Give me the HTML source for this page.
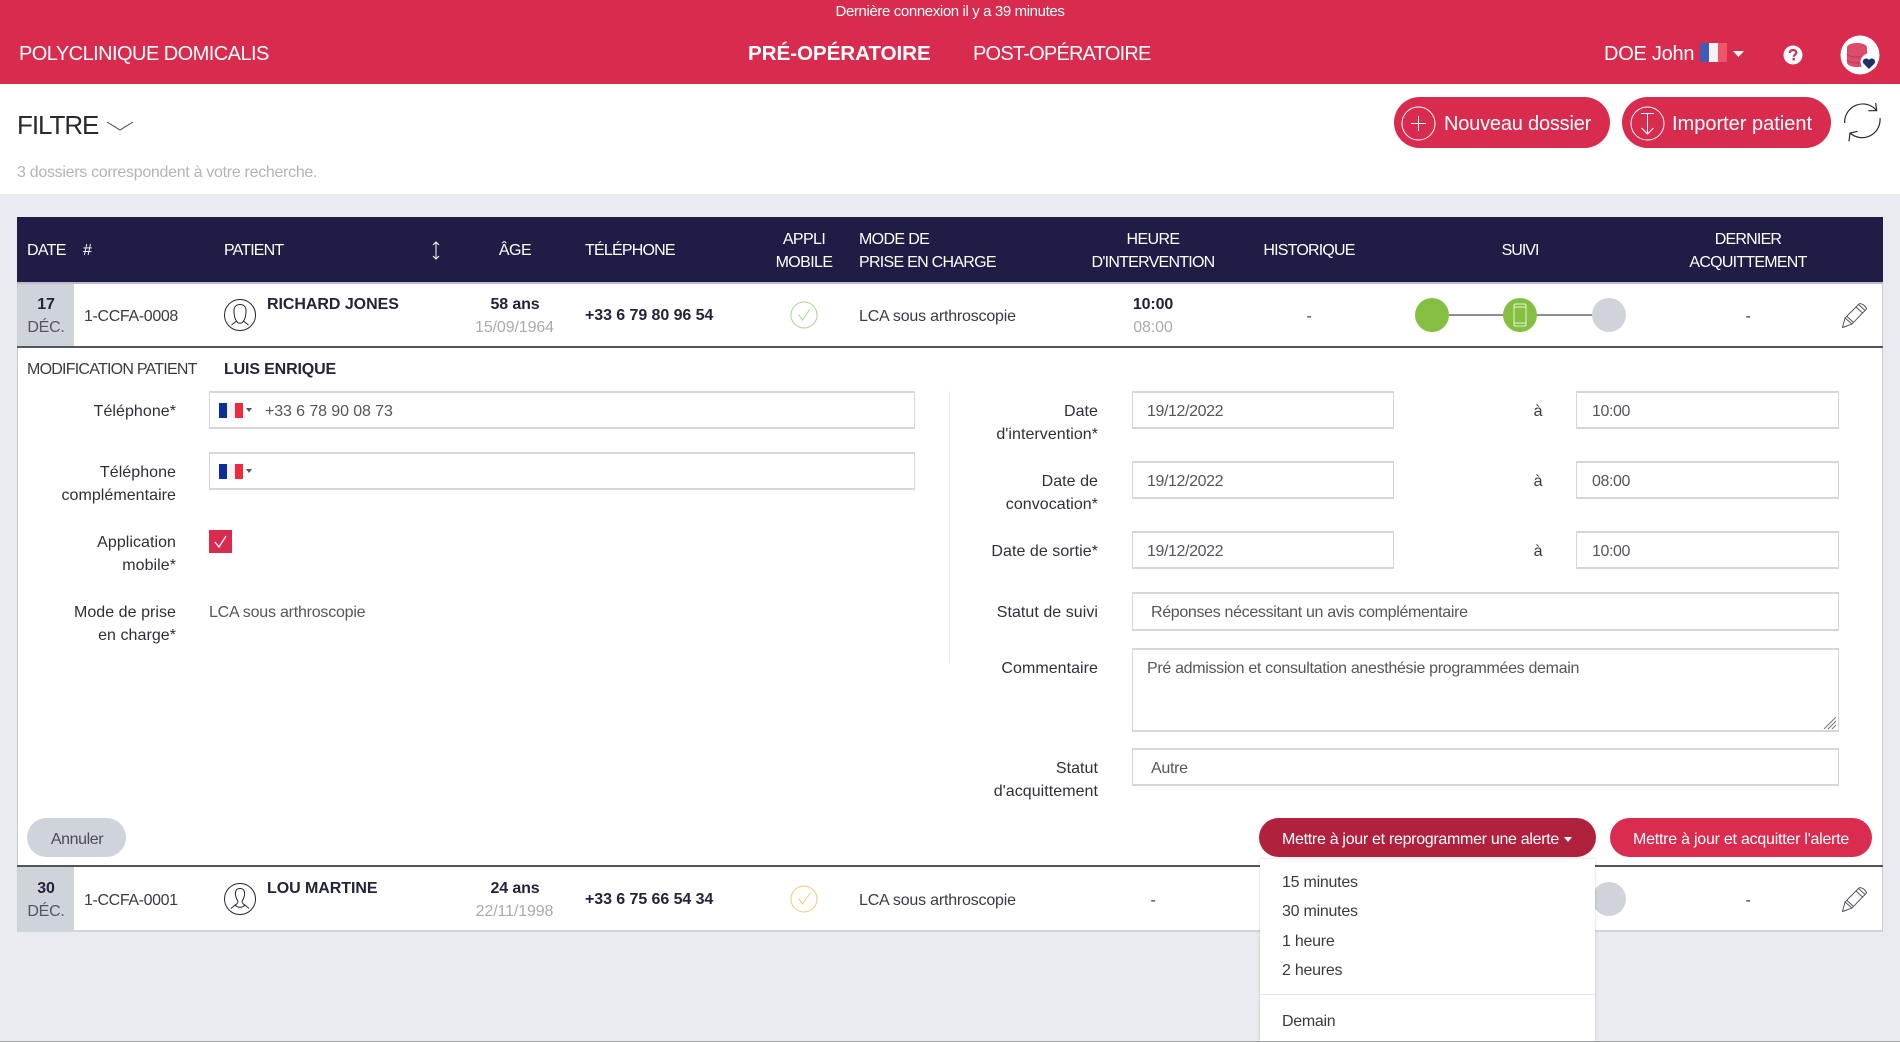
<!DOCTYPE html>
<html lang="fr">
<head>
<meta charset="utf-8">
<title>Polyclinique Domicalis</title>
<style>
html,body{margin:0;padding:0;width:1900px;height:1042px;overflow:hidden;background:#e9ebf0}
body{position:relative;font-family:"Liberation Sans",sans-serif;font-size:16px;color:#3a3a44;letter-spacing:-.25px}
div,svg{position:absolute;box-sizing:border-box}
.t{white-space:nowrap;line-height:20px;height:20px;margin-top:1px}
.c{width:240px;text-align:center}
.b{font-weight:bold;color:#23233a;letter-spacing:-.15px}
.g{color:#a9abb0;letter-spacing:-.12px}
.h{color:#fff;letter-spacing:-.55px}
.lab{color:#2f2f3a;text-align:right;letter-spacing:.05px}
.in{background:#fff;border:1px solid #d5d7db;border-bottom:2px solid #d5d7db;border-top-width:2px}
.pill{border-radius:20px}
.date{background:#cfd4da;left:18px;width:56px}
</style>
</head>
<body>
<!-- top bar -->
<div style="left:0;top:0;width:1900px;height:84px;background:#d92b4e"></div>
<div class="t c" style="left:830px;top:1px;color:#fff;font-size:15px;letter-spacing:-.38px">Dernière connexion il y a 39 minutes</div>
<div class="t h" style="left:19px;top:43px;font-size:20px">POLYCLINIQUE DOMICALIS</div>
<div class="t" style="left:748px;top:43px;font-size:20.7px;font-weight:bold;color:#fff;letter-spacing:-.12px">PRÉ-OPÉRATOIRE</div>
<div class="t h" style="left:973px;top:43px;font-size:20px;letter-spacing:-.78px">POST-OPÉRATOIRE</div>
<div class="t" style="left:1604px;top:43px;font-size:20px;color:#fff;letter-spacing:-.25px">DOE John</div>
<svg style="left:1700px;top:43px" width="27" height="19"><rect width="9" height="19" fill="#3f5cb8"/><rect x="9" width="9" height="19" fill="#f6f1f4"/><rect x="18" width="9" height="19" fill="#ee5568"/></svg>
<svg style="left:1733px;top:51px" width="12" height="7"><path d="M0 0H11L5.500 6Z" fill="#fff"/></svg>
<svg style="left:1783px;top:45px" width="20" height="20"><circle cx="10" cy="10" r="9.500" fill="#fff"/><path d="M6.800 8C6.800 5.800 8.300 5 10 5 11.900 5 13.300 6 13.300 7.800 13.300 9.800 10.800 9.800 10.800 11.800" fill="none" stroke="#d92b4e" stroke-width="2.200"/><rect x="9.500" y="13" width="2.400" height="2.400" fill="#d92b4e"/></svg>
<svg style="left:1840px;top:35px" width="42" height="42"><circle cx="20" cy="20" r="19.500" fill="#fff"/><path d="M7 13C7 9 13 8 17 8S27 9 27 13V27C27 31 21 32 17 32S7 31 7 27Z" fill="#dc4c6c"/><path d="M7 19C10 23 24 23 27 19M7 25C10 29 24 29 27 25" fill="none" stroke="#c5304f" stroke-width="1"/><circle cx="29" cy="27" r="8.500" fill="#fff"/><path d="M29 34L23.500 28.500C21 25 26.500 21.500 29 25 31.500 21.500 37 25 34.500 28.500Z" fill="#22305f"/></svg>

<!-- filter bar -->
<div style="left:0;top:84px;width:1900px;height:110px;background:#fff"></div>
<div class="t" style="left:17px;top:114px;font-size:26px;line-height:20px;color:#2a2a33;letter-spacing:-1.05px">FILTRE</div>
<svg style="left:106px;top:120px" width="28" height="12"><path d="M1 2L14 10 27 2" fill="none" stroke="#444" stroke-width="1"/></svg>
<div class="t g" style="left:17px;top:162px;letter-spacing:-.3px;color:#b3b4b8">3 dossiers correspondent à votre recherche.</div>

<div style="left:1394px;top:97px;width:216px;height:51px;border-radius:26px;background:#d92b4e"></div>
<svg style="left:1401px;top:106px" width="35" height="35" fill="none" stroke="#fff" stroke-width="1"><circle cx="17.500" cy="17.500" r="16.500"/><path d="M17.500 10V25M10 17.500H25"/></svg>
<div class="t" style="left:1444px;top:113px;font-size:20px;color:#fff;letter-spacing:-.2px">Nouveau dossier</div>
<div style="left:1622px;top:97px;width:209px;height:51px;border-radius:26px;background:#d92b4e"></div>
<svg style="left:1630px;top:106px" width="35" height="35" fill="none" stroke="#fff" stroke-width="1"><circle cx="17.500" cy="17.500" r="16.500"/><path d="M11 7.500H24M17.500 7.500V28M11.500 22L17.500 28 23.500 22"/></svg>
<div class="t" style="left:1672px;top:113px;font-size:20px;color:#fff;letter-spacing:0">Importer patient</div>
<svg style="left:1843px;top:102px" width="40" height="42" fill="none" stroke="#2a2a3a" stroke-width="1.200"><path d="M1.700 21A18 18 0 0 1 33.700 8.700M37 16A18 18 0 0 1 7 31"/><path d="M32.700 1L33.700 8.700 25.300 8.700M6 39.300L7 31 14.700 29.300"/></svg>

<!-- table header -->
<div style="left:17px;top:217px;width:1866px;height:65px;background:#1f1c45"></div>
<div style="left:17px;top:282px;width:1866px;height:2px;background:#b9b9d2"></div>
<div class="t h" style="left:27px;top:240px;font-size:16px;letter-spacing:-.7px">DATE</div>
<div class="t h" style="left:83px;top:240px;font-size:16px">#</div>
<div class="t h" style="left:224px;top:240px;font-size:16px;letter-spacing:-.85px">PATIENT</div>
<svg style="left:430px;top:241px" width="12" height="19" fill="none" stroke="#fff" stroke-width="1"><path d="M6 1V18M3 4L6 1 9 4M3 15L6 18 9 15"/></svg>
<div class="t h c" style="left:395px;top:240px;font-size:16px;letter-spacing:-.5px">ÂGE</div>
<div class="t h" style="left:585px;top:240px;font-size:16px;letter-spacing:-.8px">TÉLÉPHONE</div>
<div class="t h c" style="left:684px;top:229px;font-size:16px;letter-spacing:-.6px">APPLI</div>
<div class="t h c" style="left:684px;top:252px;font-size:16px;letter-spacing:-.6px">MOBILE</div>
<div class="t h" style="left:859px;top:229px;font-size:16px;letter-spacing:-.65px">MODE DE</div>
<div class="t h" style="left:859px;top:252px;font-size:16px;letter-spacing:-.72px">PRISE EN CHARGE</div>
<div class="t h c" style="left:1033px;top:229px;font-size:16px;letter-spacing:-.6px">HEURE</div>
<div class="t h c" style="left:1033px;top:252px;font-size:16px;letter-spacing:-.75px">D'INTERVENTION</div>
<div class="t h c" style="left:1189px;top:240px;font-size:16px;letter-spacing:-.8px">HISTORIQUE</div>
<div class="t h c" style="left:1400px;top:240px;font-size:16px;letter-spacing:-1px">SUIVI</div>
<div class="t h c" style="left:1628px;top:229px;font-size:16px;letter-spacing:-.8px">DERNIER</div>
<div class="t h c" style="left:1628px;top:252px;font-size:16px;letter-spacing:-.75px">ACQUITTEMENT</div>

<!-- main panel -->
<div style="left:17px;top:284px;width:1866px;height:648px;background:#fff;border-left:1px solid #c9ccd2;border-right:1px solid #c9ccd2;border-bottom:2px solid #d2d4d9"></div>

<!-- row 1 -->
<div class="date" style="top:284px;height:63px"></div>
<div class="t b c" style="left:-74px;top:294px">17</div>
<div class="t c" style="left:-74px;top:317px;color:#55565e">DÉC.</div>
<div class="t" style="left:84px;top:306px;letter-spacing:-.35px">1-CCFA-0008</div>
<svg style="left:223px;top:298px" width="34" height="34" fill="none" stroke="#26263a" stroke-width="1"><circle cx="17" cy="17" r="15.500"/><path d="M11 13C11 8 14 6.500 17 6.500S23 8 23 13C23 17 22 21 20.500 23L25.500 27M13.500 23C12 21 11 17 11 13M13.500 23L8.500 27M13.500 23C15 26 19 26 20.500 23"/></svg>
<div class="t b" style="left:267px;top:294px;letter-spacing:-.05px">RICHARD JONES</div>
<div class="t b c" style="left:395px;top:294px">58 ans</div>
<div class="t g c" style="left:394.500px;top:317px">15/09/1964</div>
<div class="t b" style="left:585px;top:305px;letter-spacing:-.07px">+33 6 79 80 96 54</div>
<svg style="left:790px;top:301px" width="28" height="28" fill="none" stroke="#a8d48c" stroke-width="1"><circle cx="14" cy="14" r="13"/><path d="M8.500 13.500L12.500 19 20 8"/></svg>
<div class="t" style="left:859px;top:306px;letter-spacing:-.2px">LCA sous arthroscopie</div>
<div class="t b c" style="left:1033px;top:294px">10:00</div>
<div class="t g c" style="left:1033px;top:317px">08:00</div>
<div class="t c" style="left:1189px;top:306px">-</div>
<div style="left:1449px;top:314px;width:143px;height:2px;background:#8d8d8d"></div>
<div style="left:1415px;top:298px;width:34px;height:34px;border-radius:50%;background:#84bf41"></div>
<div style="left:1503px;top:298px;width:34px;height:34px;border-radius:50%;background:#84bf41"></div>
<svg style="left:1503px;top:298px" width="34" height="34" fill="none" stroke="#e6f3d6" stroke-width="1"><rect x="11" y="6" width="12" height="22" rx="1.500"/><path d="M11 9H23M11 25H23"/></svg>
<div style="left:1592px;top:298px;width:34px;height:34px;border-radius:50%;background:#d0d4da"></div>
<div class="t c" style="left:1628px;top:306px">-</div>
<svg style="left:1841px;top:302px" width="28" height="27" fill="none" stroke="#55555f" stroke-width="1"><path d="M1.500 25.500L4 16 18 2C20 .5 25 4 25.500 7L11 22ZM4 16L11 22M6 14.500L12.500 20.500M15 5L21.500 11M17.500 2.500L24 8.500M1.500 25.500L6 24"/></svg>
<div style="left:17px;top:346px;width:1866px;height:2px;background:#54545f"></div>

<!-- form left -->
<div class="t" style="left:27px;top:359px;letter-spacing:-.76px">MODIFICATION PATIENT</div>
<div class="t b" style="left:224px;top:359px">LUIS ENRIQUE</div>

<div class="t lab" style="right:1724px;top:401px">Téléphone*</div>
<div class="in" style="left:209px;top:391px;width:706px;height:38px"></div>
<svg style="left:219px;top:403px" width="24" height="15"><rect width="8" height="15" fill="#0b2e9b"/><rect x="8" width="8" height="15" fill="#f5f5f7"/><rect x="16" width="8" height="15" fill="#ee2a3c"/></svg>
<svg style="left:246px;top:408px" width="7" height="5"><path d="M0 0H6L3 4Z" fill="#555"/></svg>
<div class="t" style="left:265px;top:401px;color:#55565e;letter-spacing:-.1px">+33 6 78 90 08 73</div>

<div class="t lab" style="right:1724px;top:462px">Téléphone</div>
<div class="t lab" style="right:1724px;top:485px">complémentaire</div>
<div class="in" style="left:209px;top:452px;width:706px;height:38px"></div>
<svg style="left:219px;top:464px" width="24" height="15"><rect width="8" height="15" fill="#0b2e9b"/><rect x="8" width="8" height="15" fill="#f5f5f7"/><rect x="16" width="8" height="15" fill="#ee2a3c"/></svg>
<svg style="left:246px;top:469px" width="7" height="5"><path d="M0 0H6L3 4Z" fill="#555"/></svg>

<div class="t lab" style="right:1724px;top:532px">Application</div>
<div class="t lab" style="right:1724px;top:555px">mobile*</div>
<svg style="left:209px;top:530px" width="23" height="23"><rect width="23" height="23" fill="#d92b4e"/><path d="M6 12L10 17 17 6" fill="none" stroke="#fff" stroke-width="1.300"/></svg>

<div class="t lab" style="right:1724px;top:602px">Mode de prise</div>
<div class="t lab" style="right:1724px;top:625px">en charge*</div>
<div class="t" style="left:209px;top:602px;color:#55565e;letter-spacing:-.22px">LCA sous arthroscopie</div>

<div style="left:949px;top:391px;width:1px;height:272px;background:#e8e9ec"></div>

<!-- form right -->
<div class="t lab" style="right:802px;top:401px">Date</div>
<div class="t lab" style="right:802px;top:424px">d'intervention*</div>
<div class="in" style="left:1132px;top:391px;width:262px;height:38px"></div>
<div class="t" style="left:1147px;top:401px;color:#55565e;letter-spacing:-.4px">19/12/2022</div>
<div class="t c" style="left:1418px;top:401px">à</div>
<div class="in" style="left:1576px;top:391px;width:263px;height:38px"></div>
<div class="t" style="left:1592px;top:401px;color:#55565e;letter-spacing:-.4px">10:00</div>

<div class="t lab" style="right:802px;top:471px">Date de</div>
<div class="t lab" style="right:802px;top:494px">convocation*</div>
<div class="in" style="left:1132px;top:461px;width:262px;height:38px"></div>
<div class="t" style="left:1147px;top:471px;color:#55565e;letter-spacing:-.4px">19/12/2022</div>
<div class="t c" style="left:1418px;top:471px">à</div>
<div class="in" style="left:1576px;top:461px;width:263px;height:38px"></div>
<div class="t" style="left:1592px;top:471px;color:#55565e;letter-spacing:-.4px">08:00</div>

<div class="t lab" style="right:802px;top:541px">Date de sortie*</div>
<div class="in" style="left:1132px;top:531px;width:262px;height:38px"></div>
<div class="t" style="left:1147px;top:541px;color:#55565e;letter-spacing:-.4px">19/12/2022</div>
<div class="t c" style="left:1418px;top:541px">à</div>
<div class="in" style="left:1576px;top:531px;width:263px;height:38px"></div>
<div class="t" style="left:1592px;top:541px;color:#55565e;letter-spacing:-.4px">10:00</div>

<div class="t lab" style="right:802px;top:602px">Statut de suivi</div>
<div class="in" style="left:1132px;top:592px;width:707px;height:39px"></div>
<div class="t" style="left:1151px;top:602px;color:#55565e;letter-spacing:-.33px">Réponses nécessitant un avis complémentaire</div>

<div class="t lab" style="right:802px;top:658px">Commentaire</div>
<div class="in" style="left:1132px;top:648px;width:707px;height:84px"></div>
<div class="t" style="left:1147px;top:658px;color:#55565e;letter-spacing:-.32px">Pré admission et consultation anesthésie programmées demain</div>
<svg style="left:1822px;top:715px" width="15" height="15" stroke="#777" stroke-width="1"><path d="M14 2L2 14M14 6L6 14M14 10L10 14"/></svg>

<div class="t lab" style="right:802px;top:758px">Statut</div>
<div class="t lab" style="right:802px;top:781px">d'acquittement</div>
<div class="in" style="left:1132px;top:748px;width:707px;height:38px"></div>
<div class="t" style="left:1151px;top:758px;color:#55565e;letter-spacing:-.3px">Autre</div>

<!-- actions -->
<div class="pill" style="left:27px;top:818px;width:99px;height:39px;background:#cfd4da"></div>
<div class="t c" style="left:-43px;top:829px;color:#4a4a55;letter-spacing:-.4px">Annuler</div>
<div class="pill" style="left:1259px;top:818px;width:337px;height:39px;background:#b0213d"></div>
<div class="t" style="left:1282px;top:829px;color:#fff;letter-spacing:-.3px">Mettre à jour et reprogrammer une alerte</div>
<svg style="left:1564px;top:837px" width="9" height="6"><path d="M0 0H8L4 5Z" fill="#fff"/></svg>
<div class="pill" style="left:1610px;top:818px;width:262px;height:39px;background:#da2c4f"></div>
<div class="t" style="left:1633px;top:829px;color:#fff;letter-spacing:-.24px">Mettre à jour et acquitter l'alerte</div>

<!-- row 2 -->
<div style="left:17px;top:865px;width:1866px;height:2px;background:#54545f"></div>
<div class="date" style="top:867px;height:64px"></div>
<div class="t b c" style="left:-74px;top:878px">30</div>
<div class="t c" style="left:-74px;top:901px;color:#55565e">DÉC.</div>
<div class="t" style="left:84px;top:890px;letter-spacing:-.38px">1-CCFA-0001</div>
<svg style="left:223px;top:882px" width="34" height="34" fill="none" stroke="#26263a" stroke-width="1"><circle cx="17" cy="17" r="15.500"/><path d="M17 6.500C13 6.500 12 10 12.500 13 13 16 14 18 15 19.500 15 21 14 22 12 23L8 26.500M17 6.500C21 6.500 22 10 21.500 13 21 16 20 18 19 19.500 19 21 20 22 22 23L26 26.500M12 23C15 26 19 26 22 23"/></svg>
<div class="t b" style="left:267px;top:878px;letter-spacing:-.05px">LOU MARTINE</div>
<div class="t b c" style="left:395px;top:878px">24 ans</div>
<div class="t g c" style="left:394.500px;top:901px">22/11/1998</div>
<div class="t b" style="left:585px;top:889px;letter-spacing:-.07px">+33 6 75 66 54 34</div>
<svg style="left:790px;top:885px" width="28" height="28" fill="none" stroke="#f5c878" stroke-width="1"><circle cx="14" cy="14" r="13"/><path d="M8.500 13.500L12.500 19 20 8"/></svg>
<div class="t" style="left:859px;top:890px;letter-spacing:-.2px">LCA sous arthroscopie</div>
<div class="t c" style="left:1033px;top:890px">-</div>
<div style="left:1592px;top:882px;width:34px;height:34px;border-radius:50%;background:#d0d4da"></div>
<div class="t c" style="left:1628px;top:890px">-</div>
<svg style="left:1841px;top:886px" width="28" height="27" fill="none" stroke="#55555f" stroke-width="1"><path d="M1.500 25.500L4 16 18 2C20 .5 25 4 25.500 7L11 22ZM4 16L11 22M6 14.500L12.500 20.500M15 5L21.500 11M17.500 2.500L24 8.500M1.500 25.500L6 24"/></svg>

<!-- dropdown -->
<div style="left:1260px;top:859px;width:335px;height:182px;background:#fff;box-shadow:0 0 3px rgba(0,0,0,.18)"></div>
<div class="t" style="left:1282px;top:872px;letter-spacing:-.25px">15 minutes</div>
<div class="t" style="left:1282px;top:901px;letter-spacing:-.25px">30 minutes</div>
<div class="t" style="left:1282px;top:931px;letter-spacing:-.25px">1 heure</div>
<div class="t" style="left:1282px;top:960px;letter-spacing:-.25px">2 heures</div>
<div style="left:1260px;top:994px;width:335px;height:1px;background:#e4e5e8"></div>
<div class="t" style="left:1282px;top:1011px;letter-spacing:-.3px">Demain</div>

<div style="left:0;top:1041px;width:1900px;height:1px;background:#a4a5a8"></div>
</body>
</html>
